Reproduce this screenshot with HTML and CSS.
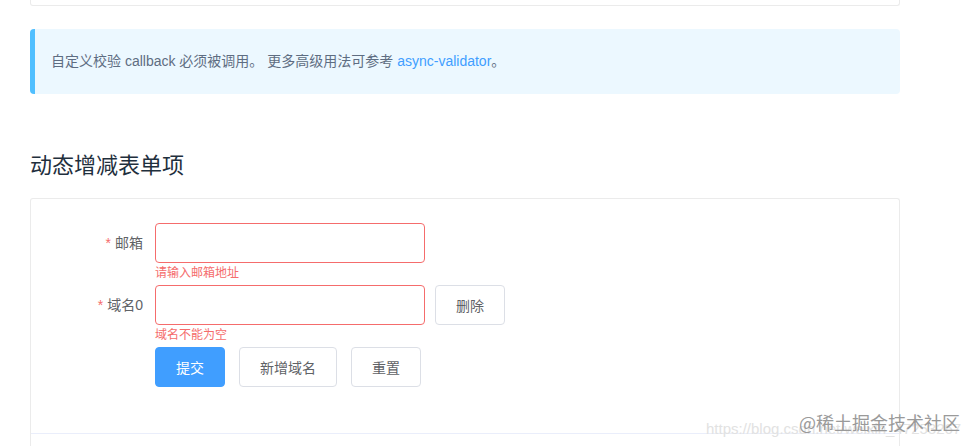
FILE: index.html
```html
<!DOCTYPE html>
<html lang="zh-CN">
<head>
    <meta charset="UTF-8">
    <title>动态增减表单项</title>
    <meta name="viewport" content="width=device-width, initial-scale=1.0">
    <link rel="stylesheet" href="styles.css">
</head>
<body>
    <div class="page">
        <div class="demo-end"></div>

        <div class="tip">
            <p>自定义校验 callback 必须被调用。 更多高级用法可参考 <a href="#">async-validator</a>。</p>
        </div>

        <h3>动态增减表单项</h3>

        <div class="demo-block">
            <div class="source">
                <form class="form">
                    <div class="form-item is-error">
                        <label class="form-label"><span class="req">*</span>邮箱</label>
                        <div class="form-content">
                            <input type="text" class="input">
                            <div class="error">请输入邮箱地址</div>
                        </div>
                    </div>
                    <div class="form-item is-error">
                        <label class="form-label"><span class="req">*</span>域名0</label>
                        <div class="form-content">
                            <input type="text" class="input">
                            <button type="button" class="btn btn-side">删除</button>
                            <div class="error">域名不能为空</div>
                        </div>
                    </div>
                    <div class="form-item">
                        <div class="form-content">
                            <button type="button" class="btn btn-primary">提交</button>
                            <button type="button" class="btn">新增域名</button>
                            <button type="button" class="btn">重置</button>
                        </div>
                    </div>
                </form>
            </div>
            <div class="meta"></div>
        </div>
    </div>

    <div class="watermark">
        <span class="wm-csdn">https://blog.csdn.net/weixin_47253267</span>
        <span class="wm-juejin">@稀土掘金技术社区</span>
    </div>
</body>
</html>
```

FILE: styles.css
```css
html, body {
    overflow: hidden;
}
body {
    margin: 0;
    background: #fff;
    font-family: "Helvetica Neue", Helvetica, "Liberation Sans", "Noto Sans CJK SC", sans-serif;
    color: #5e6d82;
}
.page {
    width: 870px;
    padding-left: 30px;
}

/* bottom of the previous demo */
.demo-end {
    height: 5px;
    border: 1px solid #ebebeb;
    border-top: none;
    border-radius: 0 0 3px 3px;
}

.tip {
    margin-top: 23px;
    padding: 8px 16px;
    background-color: #ecf8ff;
    border-radius: 4px;
    border-left: 5px solid #50bfff;
}
.tip p {
    margin: 14px 0;
    font-size: 14px;
    line-height: 21px;
    color: #5e6d82;
}
.tip a {
    color: #409eff;
    text-decoration: none;
}

h3 {
    margin: 55px 0 16px;
    font-size: 22px;
    font-weight: 400;
    line-height: 33px;
    color: #1f2f3d;
}

.demo-block {
    border: 1px solid #ebebeb;
    border-bottom: none;
    border-radius: 3px 3px 0 0;
}
.source {
    padding: 24px;
}
.meta {
    height: 12px;
    border-top: 1px solid #eaeefb;
}

.form-item {
    display: flex;
    margin-bottom: 22px;
}
.form-label {
    width: 100px;
    box-sizing: border-box;
    padding-right: 12px;
    text-align: right;
    font-size: 14px;
    line-height: 40px;
    color: #606266;
}
.req {
    color: #f56c6c;
    margin-right: 4px;
}
.form-content {
    position: relative;
    margin-left: 100px;
    display: flex;
    gap: 14px;
    font-size: 14px;
}
.form-label + .form-content {
    margin-left: 0;
}
.input {
    width: 270px;
    height: 40px;
    box-sizing: border-box;
    padding: 0 15px;
    border: 1px solid #dcdfe6;
    border-radius: 4px;
    font-size: 14px;
    outline: none;
}
.is-error .input {
    border-color: #f56c6c;
}
.error {
    position: absolute;
    top: 100%;
    left: 0;
    padding-top: 4px;
    font-size: 12px;
    line-height: 1;
    color: #f56c6c;
}

.btn {
    height: 40px;
    padding: 0 20px;
    border: 1px solid #dcdfe6;
    border-radius: 4px;
    background: #fff;
    color: #606266;
    font-family: inherit;
    font-size: 14px;
    cursor: pointer;
}
.btn-side {
    margin-left: -4px;
}
.btn-primary {
    background: #409eff;
    border-color: #409eff;
    color: #fff;
}

.watermark {
    position: absolute;
    left: 700px;
    top: 400px;
    width: 275px;
    height: 46px;
}
.wm-csdn {
    position: absolute;
    left: 6px;
    top: 20px;
    font-size: 15px;
    color: #e2e2e2;
    white-space: nowrap;
}
.wm-juejin {
    position: absolute;
    left: 99px;
    top: 9px;
    font-size: 18px;
    color: #9a9a9a;
    white-space: nowrap;
    font-family: "Noto Sans CJK SC", sans-serif;
}
```
